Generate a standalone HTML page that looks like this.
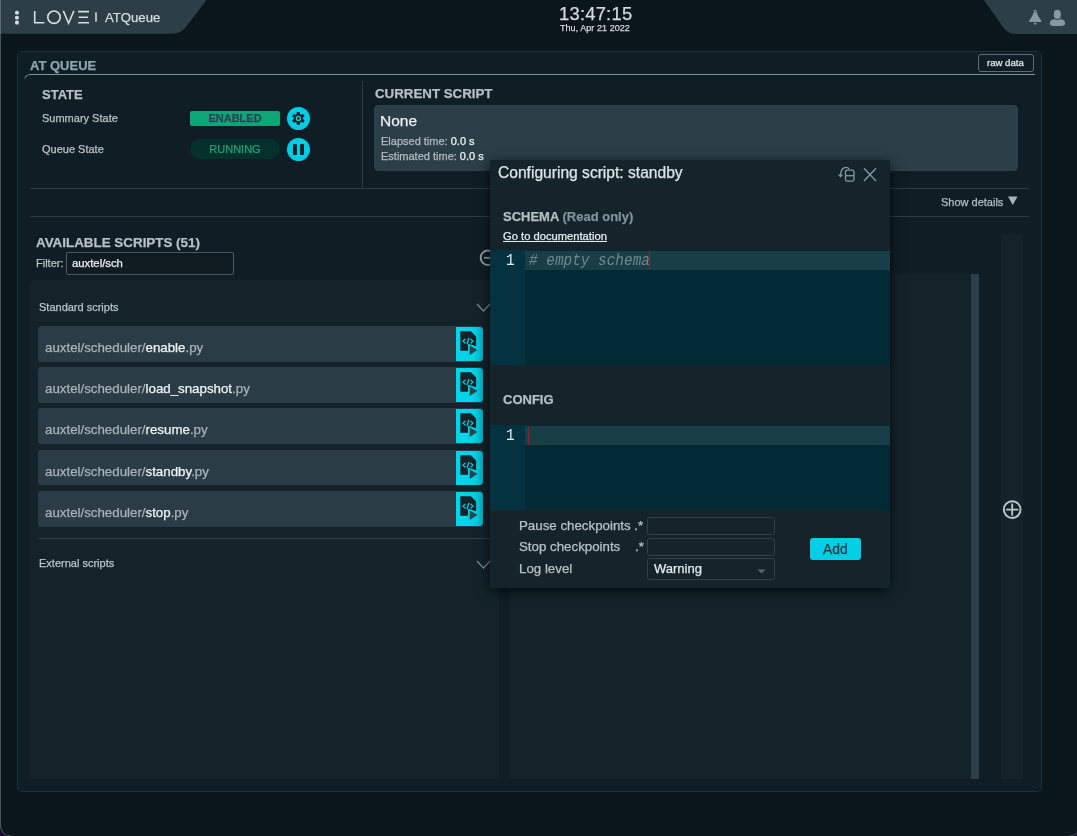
<!DOCTYPE html>
<html><head><meta charset="utf-8">
<style>
*{box-sizing:border-box;margin:0;padding:0}
html,body{width:1077px;height:836px;overflow:hidden}
body{background:#0b161b;position:relative;font-family:"Liberation Sans",sans-serif;color:#bcc2c5;-webkit-text-stroke:0.25px currentColor}
.a{position:absolute}
.t{position:absolute;white-space:pre;line-height:1;will-change:transform}
.hl{position:absolute;height:1px;background:#2b3c44}
.item{position:absolute;left:38px;width:445px;height:35.9px;background:#2a3d47;border-radius:3px}
.item .nm{position:absolute;left:7px;top:15px;will-change:transform;font-size:13.3px;color:#aab3b7;white-space:pre;line-height:1}
.item .nm b{font-weight:400;color:#f2f4f5}
.run{position:absolute;left:417.8px;top:1px;width:27px;height:34px;background:linear-gradient(90deg,#00d6ea 0%,#00d2e7 65%,#00b3c7 100%);border-radius:0 3.5px 3.5px 0}
</style></head>
<body>
<svg width="0" height="0" style="position:absolute"><defs>
<g id="runic">
<path d="M4.3,4.2 H14.9 L20.1,9.4 V19.3 L13.2,16.9 Q12,16.6 12,17.8 V23.8 H4.3 Z" fill="#14232a"/>
<path d="M13.7,18.3 V28.1 L21.3,23.1 Z" fill="#33414b"/>
<g stroke="#00cfe4" stroke-width="1.3" fill="none" stroke-linecap="round" stroke-linejoin="round">
<path d="M9,12.2 L7,14.1 L9,16"/><path d="M15,12.2 L17,14.1 L15,16"/><path d="M12.8,11.3 L11.2,16.9"/>
</g>
</g>
</defs></svg>
<!-- window left border -->
<div class="a" style="left:0;top:0;width:1px;height:836px;background:#4a5358"></div><div class="a" style="left:0;top:0;width:1px;height:34px;background:#5d6c72;z-index:2"></div>

<!-- header tabs -->
<svg class="a" style="left:0;top:0" width="1077" height="40">
  <path d="M1,0 H206.5 L186.5,26.2 Q181,33.8 172,33.8 H1 Z" fill="#2c3e46"/>
  <path d="M983.9,0 L1002.5,26.2 Q1007.8,34 1015,34 H1077 V0 Z" fill="#2c3e46"/>
  <!-- dots -->
  <rect x="15" y="10.7" width="3.9" height="3.9" rx="1.6" fill="#d5dde0"/>
  <rect x="15" y="15.7" width="3.9" height="3.9" rx="1.6" fill="#d5dde0"/>
  <rect x="15" y="20.6" width="3.9" height="3.9" rx="1.6" fill="#d5dde0"/>
  <!-- LOVE -->
  <g stroke="#d5dde0" stroke-width="1.6" fill="none">
    <path d="M34.7,10.9 V22.8 H44.4"/>
    <circle cx="54" cy="17.2" r="6.2"/>
    <path d="M63.3,10.9 L68.6,23.3 L73.9,10.9"/>
    <path d="M78.1,11.6 H89 M78.7,17.2 H88 M78.1,22.8 H89"/>
  </g>
  <rect x="95.2" y="12.3" width="1.6" height="9.4" fill="#d0d8db"/>
  <!-- bell -->
  <path d="M1035.2,12 C1036.7,12 1037.3,13.3 1037.8,15.2 L1041.3,20.9 Q1041.9,21.9 1040.8,21.9 H1029.6 Q1028.5,21.9 1029.1,20.9 L1032.6,15.2 C1033.1,13.3 1033.7,12 1035.2,12 Z" fill="#8399a3"/>
  <circle cx="1035.2" cy="11.4" r="1.6" fill="#8399a3"/><circle cx="1035.2" cy="11.4" r="0.6" fill="#2c3e46"/>
  <path d="M1033.2,22.9 H1037.2 L1035.2,25.1 Z" fill="#8399a3"/>
  <!-- user -->
  <ellipse cx="1057.35" cy="14.4" rx="3.55" ry="4.6" fill="#8399a3"/>
  <path d="M1049.8,23.5 C1049.8,20 1053,19 1055,19.3 C1056.5,20.2 1058.3,20.2 1059.8,19.3 C1062,19 1065.2,20 1065.2,23.5 C1065.2,25.5 1063,26 1057.5,26 C1052,26 1049.8,25.5 1049.8,23.5 Z" fill="#8399a3"/>
</svg>
<div class="t" style="left:104.5px;top:11px;font-size:13.15px;color:#d5dde0">ATQueue</div>

<!-- clock -->
<div class="t" style="left:558.8px;top:4.6px;font-size:18.4px;letter-spacing:0.22px;color:#d4dadd">13:47:15</div>
<div class="t" style="left:559.6px;top:23.5px;font-size:9px;letter-spacing:0.05px;color:#d4dadd">Thu, Apr 21 2022</div>

<!-- main panel -->
<div class="a" style="left:17px;top:51px;width:1025px;height:741px;background:#0f1e24;border:1px solid #173240;border-radius:5px"></div>
<div class="t" style="left:30px;top:59px;font-size:13px;font-weight:700;color:#8fa5ae">AT QUEUE</div>
<div class="a" style="left:978px;top:54.4px;width:56px;height:17.2px;border:1px solid #5b6e75;border-radius:3px"></div>
<div class="t" style="left:987.2px;top:57.8px;font-size:9.6px;color:#e4e9eb">raw data</div>
<!-- title underline with curved left -->
<div class="a" style="left:24px;top:73.8px;width:1011px;height:12px;border-top:1.2px solid #7d969f;border-left:1px solid #7d969f;border-radius:6px 0 0 0;-webkit-mask-image:linear-gradient(180deg,#000 0,#000 3px,transparent 6px)"></div>

<!-- STATE -->
<div class="t" style="left:41.7px;top:88px;font-size:13px;font-weight:700;color:#b9bfc2">STATE</div>
<div class="t" style="left:41.7px;top:112.5px;font-size:11px;color:#bcc2c5">Summary State</div>
<div class="t" style="left:41.7px;top:143.5px;font-size:11px;color:#bcc2c5">Queue State</div>
<div class="a" style="left:190px;top:111px;width:90px;height:15px;background:#0fa677;border-radius:2px"></div>
<div class="t" style="left:190px;top:113px;width:90px;text-align:center;font-size:11px;font-weight:700;color:#2f4352">ENABLED</div>
<div class="a" style="left:190px;top:139px;width:90px;height:20px;background:#06302b;border-radius:10px"></div>
<div class="t" style="left:190px;top:144px;width:90px;text-align:center;font-size:11px;color:#19a37a">RUNNING</div>
<div class="a" style="left:287px;top:107px;width:23px;height:23px;border-radius:50%;background:#00cde4"></div>
<div class="a" style="left:287px;top:138px;width:23px;height:23px;border-radius:50%;background:#00cde4"></div>
<svg class="a" style="left:287px;top:107px" width="23" height="23" viewBox="0 0 23 23">
  <g transform="translate(11.4 11.4)" fill="#14222a">
    <circle r="4.6"/>
    <rect x="-1.6" y="-6.3" width="3.2" height="12.6" rx="0.4"/>
    <rect x="-1.6" y="-6.3" width="3.2" height="12.6" rx="0.4" transform="rotate(60)"/>
    <rect x="-1.6" y="-6.3" width="3.2" height="12.6" rx="0.4" transform="rotate(120)"/>
    <circle r="2.7" fill="#00cde4"/>
    <circle r="1.3"/>
  </g>
</svg>
<div class="a" style="left:293px;top:143.8px;width:4px;height:11.2px;background:#15232a;border-radius:1px"></div>
<div class="a" style="left:300px;top:143.8px;width:4px;height:11.2px;background:#15232a;border-radius:1px"></div>

<!-- divider -->
<div class="a" style="left:362px;top:81px;width:1px;height:107px;background:#2b3c44"></div>

<!-- CURRENT SCRIPT -->
<div class="t" style="left:374.8px;top:87.3px;font-size:13.3px;font-weight:700;color:#b9bfc2">CURRENT SCRIPT</div>
<div class="a" style="left:374px;top:105.2px;width:644px;height:65.7px;background:#2b3f49;border-radius:4px"></div>
<div class="t" style="left:380.3px;top:112.6px;font-size:15.5px;color:#eef1f2">None</div>
<div class="t" style="left:380.8px;top:136px;font-size:11px;color:#b4bcc0">Elapsed time: <span style="color:#f0f3f4">0.0 s</span></div>
<div class="t" style="left:380.8px;top:150.5px;font-size:11px;color:#b4bcc0">Estimated time: <span style="color:#f0f3f4">0.0 s</span></div>

<!-- horizontal lines -->
<div class="hl" style="left:30px;top:188px;width:999px"></div>
<div class="t" style="left:941px;top:196.5px;font-size:11px;color:#b9bfc2">Show details</div>
<svg class="a" style="left:1008px;top:196px" width="10" height="10"><path d="M0,0.5 H9.5 L4.75,9 Z" fill="#aab1b4"/></svg>
<div class="hl" style="left:30px;top:216px;width:999px"></div>

<!-- AVAILABLE SCRIPTS -->
<div class="t" style="left:35.6px;top:236px;font-size:13.4px;font-weight:700;color:#b9bfc2">AVAILABLE SCRIPTS (51)</div>
<div class="t" style="left:35.6px;top:257.5px;font-size:11px;color:#bcc2c5">Filter:</div>
<div class="a" style="left:66px;top:252.3px;width:168px;height:22.3px;background:#0f1b20;border:1px solid #4a5960;border-radius:2px"></div>
<div class="t" style="left:71.9px;top:258px;font-size:11.3px;color:#eef1f2">auxtel/sch</div>

<!-- minus circle -->
<svg class="a" style="left:479px;top:248px" width="20" height="20"><circle cx="9" cy="9.8" r="7.3" stroke="#9aa6ab" stroke-width="1.8" fill="none"/><path d="M5,9.8 H13" stroke="#9aa6ab" stroke-width="1.8"/></svg>

<!-- left column -->
<div class="a" style="left:30px;top:279.7px;width:469px;height:499px;background:#14232a;border-radius:4px"></div>
<div class="t" style="left:38.9px;top:301.5px;font-size:11px;color:#bcc2c5">Standard scripts</div>
<svg class="a" style="left:475.5px;top:302.5px" width="16" height="10"><path d="M1,1 L7.5,8 L14,1" stroke="#7d8c92" stroke-width="1.2" fill="none"/></svg>

<div class="item" style="top:325.9px"><div class="nm">auxtel/scheduler/<b>enable</b>.py</div><svg class="run" width="27" height="34" viewBox="0 0 27 34"><use href="#runic"/></svg></div>
<div class="item" style="top:367.1px"><div class="nm">auxtel/scheduler/<b>load_snapshot</b>.py</div><svg class="run" width="27" height="34" viewBox="0 0 27 34"><use href="#runic"/></svg></div>
<div class="item" style="top:408.4px"><div class="nm">auxtel/scheduler/<b>resume</b>.py</div><svg class="run" width="27" height="34" viewBox="0 0 27 34"><use href="#runic"/></svg></div>
<div class="item" style="top:449.6px"><div class="nm">auxtel/scheduler/<b>standby</b>.py</div><svg class="run" width="27" height="34" viewBox="0 0 27 34"><use href="#runic"/></svg></div>
<div class="item" style="top:490.9px"><div class="nm">auxtel/scheduler/<b>stop</b>.py</div><svg class="run" width="27" height="34" viewBox="0 0 27 34"><use href="#runic"/></svg></div>
<div class="hl" style="left:38px;top:538px;width:461px;background:#2e4049"></div>
<div class="t" style="left:38.9px;top:557.5px;font-size:11px;color:#bcc2c5">External scripts</div>
<svg class="a" style="left:475.5px;top:559.5px" width="16" height="10"><path d="M1,1 L7.5,8 L14,1" stroke="#7d8c92" stroke-width="1.2" fill="none"/></svg>

<!-- middle column -->
<div class="a" style="left:510px;top:273.7px;width:469px;height:505.3px;background:#14232a"></div>
<div class="a" style="left:971px;top:273.7px;width:8px;height:505.3px;background:#2d3f48"></div>
<!-- right column -->
<div class="a" style="left:1001px;top:234px;width:22px;height:545px;background:#14232a"></div>
<svg class="a" style="left:1001px;top:499px" width="22" height="22"><circle cx="11.2" cy="10.6" r="8.35" stroke="#c0c6c9" stroke-width="1.9" fill="none"/><path d="M5.1,10.6 H17.3 M11.2,4.5 V16.7" stroke="#c0c6c9" stroke-width="1.8"/></svg>

<!-- MODAL -->
<div class="a" style="left:489.7px;top:160.3px;width:400.3px;height:427.4px;background:#15232a;box-shadow:0 3px 12px rgba(0,0,0,0.75)"></div>
<div class="t" style="left:498px;top:165px;font-size:15.6px;color:#dfe5e7">Configuring script: standby</div>
<svg class="a" style="left:836px;top:164px" width="46" height="22">
  <g stroke="#8399a3" stroke-width="1.3" fill="none">
    <rect x="9.5" y="6.1" width="8.5" height="11" rx="1.5"/>
    <path d="M9.5,11.7 H18"/>
    <path d="M13.2,5 C11,2.5 6.5,2.8 5,8 L4.4,12"/>
    <path d="M2.6,10.3 L4.4,12.5 L6.4,10.7"/>
    <path d="M28,4.2 L40,17 M40,4.2 L28,17"/>
  </g>
</svg>
<div class="t" style="left:502.7px;top:210px;font-size:13px;font-weight:700;color:#b8bfc3">SCHEMA <span style="color:#7e939c">(Read only)</span></div>
<div class="t" style="left:502.7px;top:230.5px;font-size:11.2px;color:#e8ecee;text-decoration:underline">Go to documentation</div>

<!-- schema editor -->
<div class="a" style="left:489.7px;top:250.2px;width:400.3px;height:114.5px;background:#022a35"></div>
<div class="a" style="left:489.7px;top:250.2px;width:35.3px;height:114.5px;background:#043241"></div>

<div class="a" style="left:525px;top:250.9px;width:365px;height:18.9px;background:#1a3e47"></div>
<div class="t" style="left:505.5px;top:253px;font-size:14.4px;font-family:'Liberation Mono',monospace;-webkit-text-stroke:0;transform:scaleY(1.1);transform-origin:0 0;color:#e6f2f5">1</div>
<div class="t" style="left:528.7px;top:253px;font-size:14.4px;font-family:'Liberation Mono',monospace;-webkit-text-stroke:0;transform:scaleY(1.1);transform-origin:0 0;font-style:italic;color:#6e898e">#&#160;empty&#160;schema</div>
<div class="a" style="left:649.4px;top:250.6px;width:1px;height:18.6px;background:#8b2a33"></div>

<div class="t" style="left:502.8px;top:393px;font-size:13px;font-weight:700;color:#b8bfc3">CONFIG</div>

<!-- config editor -->
<div class="a" style="left:489.7px;top:425px;width:400.3px;height:85.1px;background:#022a35"></div>
<div class="a" style="left:489.7px;top:425px;width:35.3px;height:85.1px;background:#043241"></div>

<div class="a" style="left:525px;top:425.5px;width:365px;height:19px;background:#1a3e47"></div>
<div class="t" style="left:505.5px;top:428px;font-size:14.4px;font-family:'Liberation Mono',monospace;-webkit-text-stroke:0;transform:scaleY(1.1);transform-origin:0 0;color:#e6f2f5">1</div>
<div class="a" style="left:528px;top:425.5px;width:1.2px;height:19px;background:#b0141e"></div>

<!-- form -->
<div class="t" style="left:519px;top:519px;font-size:13.3px;color:#bcc2c5">Pause checkpoints .*</div>
<div class="t" style="left:519px;top:540px;font-size:13.3px;color:#bcc2c5">Stop checkpoints</div>
<div class="t" style="left:635px;top:540px;font-size:13.3px;color:#bcc2c5">.*</div>
<div class="t" style="left:519px;top:561.5px;font-size:13.3px;color:#bcc2c5">Log level</div>
<div class="a" style="left:647.4px;top:516.6px;width:127.4px;height:18.5px;border:1.4px solid #323f47;border-radius:2.5px"></div>
<div class="a" style="left:647.4px;top:537.8px;width:127.4px;height:18px;border:1.4px solid #323f47;border-radius:2.5px"></div>
<div class="a" style="left:647.4px;top:558px;width:127.4px;height:22.3px;border:1.4px solid #323f47;border-radius:2.5px"></div>
<div class="t" style="left:653.8px;top:561.5px;font-size:13px;color:#e6eaec">Warning</div>
<svg class="a" style="left:757px;top:569px" width="10" height="5"><path d="M0.5,0.5 H8.5 L4.5,4.5 Z" fill="#56676e"/></svg>
<div class="a" style="left:809.8px;top:537.8px;width:50.8px;height:21.8px;background:#00cfe6;border-radius:3px"></div>
<div class="t" style="left:822.8px;top:543px;font-size:13.9px;color:#2a3a44">Add</div>

<svg class="a" style="left:0;top:820px" width="16" height="16"><path d="M0,6 Q1,15.5 10,16 H0 Z" fill="#1a0a30"/><path d="M0.5,5 Q1,15.5 10.5,16" stroke="#4a5358" stroke-width="1" fill="none"/></svg>
<svg class="a" style="left:1061px;top:820px" width="16" height="16"><path d="M16,11 Q15,15.8 9,16 H16 Z" fill="#1a0a30"/><path d="M16.5,10.5 Q15,15.8 8,16.2" stroke="#4a5358" stroke-width="1" fill="none"/></svg>
</body></html>
